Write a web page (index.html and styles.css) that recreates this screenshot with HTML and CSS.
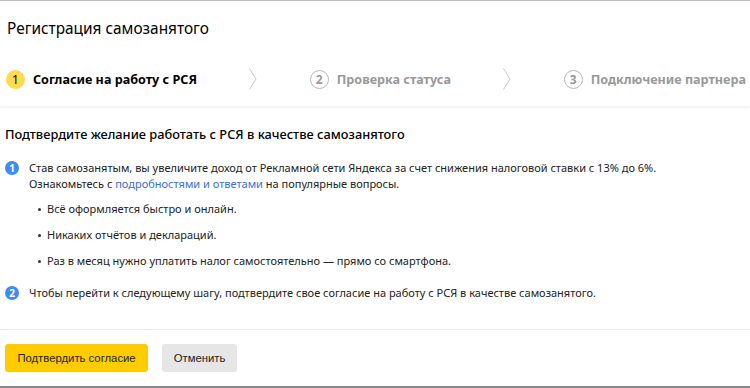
FILE: index.html
```html
<!DOCTYPE html>
<html lang="ru">
<head>
    <meta charset="UTF-8">
    <title>Регистрация самозанятого</title>
    <link rel="stylesheet" href="styles.css">
</head>
<body>
    <div class="dialog">
        <h1 class="dialog-title">Регистрация самозанятого</h1>

        <div class="steps">
            <div class="step step-active">
                <span class="step-num">1</span>
                <span class="step-label">Согласие на работу с РСЯ</span>
            </div>
            <svg class="step-arrow" width="8" height="22" viewBox="0 0 8 22"><path d="M0.5 0.5 L7 11 L0.5 21.5" fill="none" stroke="#c8c8c8" stroke-width="1"/></svg>
            <div class="step">
                <span class="step-num">2</span>
                <span class="step-label">Проверка статуса</span>
            </div>
            <svg class="step-arrow" width="8" height="22" viewBox="0 0 8 22"><path d="M0.5 0.5 L7 11 L0.5 21.5" fill="none" stroke="#c8c8c8" stroke-width="1"/></svg>
            <div class="step">
                <span class="step-num">3</span>
                <span class="step-label">Подключение партнера</span>
            </div>
        </div>

        <div class="content">
            <h2 class="content-title">Подтвердите желание работать с РСЯ в качестве самозанятого</h2>

            <div class="item">
                <span class="item-num">1</span>
                <div class="item-text">
                    <p>Став самозанятым, вы увеличите доход от Рекламной сети Яндекса за счет снижения налоговой ставки с 13% до 6%.<br>
                    Ознакомьтесь с <a href="#">подробностями и ответами</a> на популярные вопросы.</p>
                </div>
            </div>

            <ul class="bullets">
                <li>Всё оформляется быстро и онлайн.</li>
                <li>Никаких отчётов и деклараций.</li>
                <li>Раз в месяц нужно уплатить налог самостоятельно — прямо со смартфона.</li>
            </ul>

            <div class="item">
                <span class="item-num">2</span>
                <div class="item-text">
                    <p>Чтобы перейти к следующему шагу, подтвердите свое согласие на работу с РСЯ в качестве самозанятого.</p>
                </div>
            </div>
        </div>

        <div class="actions">
            <button class="btn btn-primary">Подтвердить согласие</button>
            <button class="btn btn-default">Отменить</button>
        </div>
    </div>
    <div class="bottom-strip"></div>
</body>
</html>
```

FILE: styles.css
```css
* {
    margin: 0;
    padding: 0;
    box-sizing: border-box;
}

body {
    width: 750px;
    height: 388px;
    overflow: hidden;
    background: #fff;
    color: #000;
    font-family: 'Noto Sans', 'Open Sans', Arial, sans-serif;
}

.dialog {
    height: 386px;
    border-top: 1px solid #bdbdbd;
}

.dialog-title {
    font-size: 15.4px;
    font-weight: normal;
    line-height: 20px;
    padding: 18px 0 0 7px;
    height: 58px;
}

/* steps bar */
.steps {
    display: flex;
    justify-content: space-between;
    align-items: center;
    height: 47px;
    padding: 0 4px 7px 6px;
    box-shadow: 0 2px 2px rgba(0, 0, 0, 0.05);
}

.step {
    display: flex;
    align-items: center;
    gap: 8px;
    font-size: 12.6px;
    font-weight: bold;
    color: #999;
}

.step-num {
    width: 19px;
    height: 19px;
    border-radius: 50%;
    border: 1px solid #b8b8b8;
    display: flex;
    justify-content: center;
    align-items: center;
    font-size: 12px;
    color: #999;
}

.step-active {
    color: #000;
}

    .step-active .step-num {
        background: #ffdb4d;
        border-color: #ffdb4d;
        font-weight: normal;
        color: #000;
    }

.step-arrow {
    display: block;
}

/* main text */
.content {
    padding: 19px 0 0 5px;
    font-size: 11px;
    line-height: 16px;
    color: #222;
    height: 223px;
}

.content-title {
    font-size: 12.8px;
    font-weight: 500;
    line-height: 18px;
    color: #000;
    margin-bottom: 17px;
}

.item {
    display: flex;
    gap: 10px;
}

.item-num {
    flex: none;
    width: 14px;
    height: 14px;
    margin-top: 1px;
    border-radius: 50%;
    background: #3d8cf2;
    color: #fff;
    font-size: 10px;
    font-weight: bold;
    line-height: 14px;
    text-align: center;
}

.item-text a {
    color: #3b6fd8;
    text-decoration: none;
}

.bullets {
    list-style: none;
    padding: 9px 0 6px 33px;
}

    .bullets li {
        position: relative;
        padding-left: 9px;
        margin-bottom: 10px;
    }

        .bullets li::before {
            content: "";
            position: absolute;
            left: 0;
            top: 7px;
            width: 3px;
            height: 3px;
            border-radius: 50%;
            background: #333;
        }

/* footer */
.actions {
    border-top: 1px solid #ececec;
    padding: 14px 0 0 5px;
    display: flex;
    gap: 14px;
}

.btn {
    height: 28px;
    border: none;
    border-radius: 3px;
    padding: 0;
    white-space: nowrap;
    font-family: 'Liberation Sans', Arial, sans-serif;
    font-size: 11.3px;
    color: #222;
    cursor: pointer;
}

.btn-primary {
    background: #ffcc00;
    width: 143px;
}

.btn-default {
    background: #e6e6e6;
    width: 75px;
}

.bottom-strip {
    height: 2px;
    background: #8a8a8e;
}
```
